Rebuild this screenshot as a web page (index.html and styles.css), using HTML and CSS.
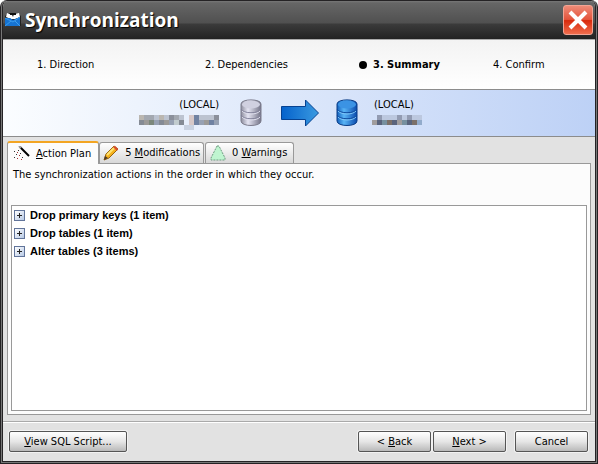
FILE: index.html
```html
<!DOCTYPE html>
<html lang="en">
<head>
<meta charset="utf-8">
<title>Synchronization</title>
<link rel="stylesheet" href="styles.css">
</head>
<body>
<div class="window">
  <header class="titlebar">
    <svg class="app-icon" width="16" height="16" viewBox="0 0 16 16" aria-hidden="true">
      <path d="M0 4L4 1L12 1L16 4L16 14L0 14Z" fill="#222"/>
      <path d="M1 5L2 1L7 3L8 5L9 2L14 1L15 5L10 7L6 7Z" fill="#fff"/>
      <path d="M5 1h6v2H5z" fill="#111"/>
      <path d="M0 6L5 6L8 8L15 5L15 14L0 14Z" fill="#1673d2"/>
      <path d="M0 6L8 10L15 5M0 14L6 9M15 14L10 9" fill="none" stroke="#3d9dec"/>
    </svg>
    <h1>Synchronization</h1>
    <button class="close" type="button" aria-label="Close">
      <svg width="20" height="20" viewBox="0 0 20 20"><path d="M2 2L18 18M18 2L2 18" stroke="#fff" stroke-width="4"/></svg>
    </button>
  </header>

  <ol class="steps">
    <li>1. Direction</li>
    <li>2. Dependencies</li>
    <li class="current"><span class="dot"></span>3. Summary</li>
    <li>4. Confirm</li>
  </ol>

  <section class="route">
    <div class="side source">
      <span>(LOCAL)</span>
      <svg class="masked" width="80" height="15" viewBox="0 0 16 3" shape-rendering="crispEdges" aria-hidden="true">
        <path d="M0 0h1v1H0zM4 0h1v1H4z" fill="#bab6b0"/>
        <path d="M1 0h2v1H1zM7 0h1v1H7z" fill="#a3a8b0"/>
        <path d="M3 0h1v1H3zM5 0h1v1H5zM8 0h1v1H8zM12 0h3v1h-3z" fill="#bcc3d0"/>
        <path d="M6 0h1v1H6zM15 0h1v1h-1z" fill="#8b909b"/>
        <path d="M0 1h1v1H0zM4 1h1v1H4zM8 1h1v1H8z" fill="#858b95"/>
        <path d="M1 1h1v1H1zM5 1h1v1H5zM13 1h1v1h-1z" fill="#9b9a98"/>
        <path d="M2 1h1v1H2z" fill="#7c887c"/>
        <path d="M3 1h1v1H3zM6 1h1v1H6zM12 1h1v1h-1zM15 1h1v1h-1z" fill="#97a1b3"/>
        <path d="M7 1h1v1H7z" fill="#c2cccf"/>
        <path d="M10 0h1v2h-1z" fill="#d6c8c8"/>
        <path d="M11 0h1v2h-1zM14 1h1v1h-1z" fill="#7082a2"/>
        <path d="M9 2h2v1H9z" fill="#c9d2e1"/>
      </svg>
    </div>
    <svg class="db" width="22" height="28" viewBox="0 0 22 28" aria-hidden="true">
      <defs><linearGradient id="grey"><stop stop-color="#8e8e9e"/><stop offset=".35" stop-color="#e4e4f2"/><stop offset="1" stop-color="#747488"/></linearGradient></defs>
      <path d="M1 5C1 -.5 21 -.5 21 5V22C21 28 1 28 1 22Z" fill="url(#grey)" stroke="#7c7c8c"/>
      <ellipse cx="11" cy="5.500" rx="9" ry="4" fill="#d0d0e0"/>
      <path d="M1 10C3 15 19 15 21 10M1 16C3 21 19 21 21 16" fill="none" stroke="#80809a"/>
      <path d="M2 12C5 16 17 16 20 12M2 18C5 22 17 22 20 18" fill="none" stroke="#dcdcea"/>
    </svg>
    <svg class="arrow" width="40" height="28" viewBox="0 0 40 28" aria-hidden="true">
      <defs><linearGradient id="flow"><stop stop-color="#0562cc"/><stop offset="1" stop-color="#3a9ae0"/></linearGradient></defs>
      <path d="M1.500 7.500H25.500V1L38.500 14L25.500 27V20.500H1.500Z" fill="url(#flow)" stroke="#064292"/>
    </svg>
    <svg class="db" width="22" height="28" viewBox="0 0 22 28" aria-hidden="true">
      <defs><linearGradient id="blue"><stop stop-color="#1260bd"/><stop offset=".35" stop-color="#58b4f6"/><stop offset="1" stop-color="#0a4aad"/></linearGradient></defs>
      <path d="M1 5C1 -.5 21 -.5 21 5V22C21 28 1 28 1 22Z" fill="url(#blue)" stroke="#0a3c86"/>
      <ellipse cx="11" cy="5.500" rx="9" ry="4" fill="#3b93e4"/>
      <path d="M1 10C3 15 19 15 21 10M1 16C3 21 19 21 21 16" fill="none" stroke="#0d489c"/>
      <path d="M2 12C5 16 17 16 20 12M2 18C5 22 17 22 20 18" fill="none" stroke="#7ec6f8"/>
    </svg>
    <div class="side target">
      <span>(LOCAL)</span>
      <svg class="masked" width="50" height="10" viewBox="0 0 10 2" shape-rendering="crispEdges" aria-hidden="true">
        <path d="M1 0h1v1H1zM5 0h1v1H5zM7 0h1v1H7z" fill="#929bb2"/>
        <path d="M2 0h3v1H2zM6 0h1v1H6zM8 0h2v1H8z" fill="#bcc8df"/>
        <path d="M0 1h1v1H0zM5 1h1v1H5z" fill="#a09d9e"/>
        <path d="M1 1h1v1H1zM4 1h1v1H4zM7 1h1v1H7z" fill="#59647d"/>
        <path d="M2 1h1v1H2zM6 1h1v1H6z" fill="#76909f"/>
        <path d="M3 1h1v1H3zM8 1h1v1H8z" fill="#7b7069"/>
        <path d="M9 1h1v1H9z" fill="#92abcb"/>
      </svg>
    </div>
  </section>

  <main class="body">
    <div class="tabs" role="tablist">
      <button class="tab active" type="button" role="tab" aria-selected="true">
        <svg width="16" height="16" viewBox="0 0 16 16" aria-hidden="true"><path d="M6 1L15 10" stroke="#000" stroke-width="2"/><path d="M5 0L7 2" stroke="#999" stroke-width="2"/><path d="M0 5h1v1H0zM4 4h1v1H4zM2 8h1v1H2zM6 7h1v1H6zM0 11h1v1H0zM8 11h1v1H8z" fill="#333"/><path d="M3 6h1v1H3zM5 9h1v1H5zM3 12h1v1H3zM7 13h1v1H7z" fill="#a33"/></svg>
        <span><u>A</u>ction Plan</span>
      </button>
      <button class="tab modifications" type="button" role="tab" aria-selected="false">
        <svg width="16" height="16" viewBox="0 0 16 16" aria-hidden="true"><path d="M1 15L3 9L11 1L15 4L6 13Z" fill="#f5b21c" stroke="#966310"/><path d="M4 10L12 2" stroke="#ffe373" stroke-width="2"/><path d="M10 2L12 1L15 4L14 6Z" fill="#d84b31"/><path d="M1 15L2 11L5 13Z" fill="#4c3a28"/></svg>
        <span>5 <u>M</u>odifications</span>
      </button>
      <button class="tab" type="button" role="tab" aria-selected="false">
        <svg width="16" height="16" viewBox="0 0 16 16" aria-hidden="true"><path d="M7 1H9L15 13V15H1V13Z" fill="#bff5d0" stroke="#6f9c82" stroke-dasharray="2 1"/></svg>
        <span>0 <u>W</u>arnings</span>
      </button>
    </div>
    <section class="panel" role="tabpanel">
      <p>The synchronization actions in the order in which they occur.</p>
      <ul class="tree">
        <li><button class="expander" type="button" aria-label="Expand"></button>Drop primary keys (1 item)</li>
        <li><button class="expander" type="button" aria-label="Expand"></button>Drop tables (1 item)</li>
        <li><button class="expander" type="button" aria-label="Expand"></button>Alter tables (3 items)</li>
      </ul>
    </section>
  </main>

  <footer class="actions">
    <button class="btn wide" type="button"><u>V</u>iew SQL Script...</button>
    <button class="btn" type="button">&lt; <u>B</u>ack</button>
    <button class="btn" type="button"><u>N</u>ext &gt;</button>
    <button class="btn cancel" type="button">Cancel</button>
  </footer>
</div>
</body>
</html>
```
FILE: styles.css
```css
* { box-sizing: border-box; }

body {
  margin: 0;
  background: #fff;
  color: #000;
  font: 11px/14px "DejaVu Sans Condensed", "DejaVu Sans", sans-serif;
}

button { font: inherit; color: inherit; }

.window {
  display: flex;
  flex-direction: column;
  min-height: 100vh;
  border: 3px double #252325;
  border-top: 1px solid #252325;
  border-radius: 7px 7px 0 0;
  background: #e2e2e2 padding-box, #6a686a;
  background: linear-gradient(#e2e2e2, #e2e2e2) padding-box, linear-gradient(#777, #777) border-box;
  overflow: hidden;
}

.titlebar {
  display: flex;
  align-items: center;
  height: 39px;
  padding: 0 2px;
  border-bottom: 1px solid #aaa;
  background: linear-gradient(#777 0, #666 2px, #505050 22px, #3b3b3b 23px, #222 100%);
}

.titlebar h1 {
  flex: 1;
  margin: 0 0 0 4px;
  color: #fff;
  font: bold 19px/24px "Open Sans", sans-serif;
  text-shadow: 1px 1px 1px #000;
}

.close {
  display: grid;
  place-items: center;
  width: 30px;
  height: 30px;
  padding: 0;
  border: 1px solid #f3a494;
  border-radius: 3px;
  background: linear-gradient(#ee8b78, #e4543c 48%, #d92a0c 52%, #f06d4d);
}

.steps {
  display: grid;
  grid-template-columns: 168px 154px 134px 1fr;
  align-items: center;
  height: 49px;
  margin: 0;
  padding: 0 0 0 34px;
  background: linear-gradient(#f3f3f3, #fff);
  list-style: none;
}

.current { display: flex; align-items: center; gap: 6px; font-weight: bold; }
.dot { width: 8px; height: 8px; border-radius: 50%; background: #000; }

.route {
  display: grid;
  grid-template-columns: 221px 22px 42px 22px 1fr;
  column-gap: 16px;
  align-items: center;
  height: 48px;
  border: solid #8c8c8c;
  border-width: 1px 0;
  background: linear-gradient(90deg, #fbfdff, #bdd1f6);
}

.side { display: flex; flex-direction: column; gap: 3px; height: 30px; }
.source { align-items: flex-end; padding-right: 5px; }
.arrow { justify-self: end; }
.masked { display: block; flex: none; }
.target .masked { margin-left: -2px; }

.body { display: flex; flex: 1; flex-direction: column; padding: 4px 4px 6px; }

.tabs { display: flex; align-items: flex-end; }

.tab {
  display: flex;
  align-items: center;
  gap: 6px;
  height: 21px;
  padding: 0 6px 0 4px;
  border: 1px solid #999;
  border-bottom: 0;
  border-radius: 3px 3px 0 0;
  background: linear-gradient(#fff, #d8d8d8);
}

.tab.active {
  z-index: 1;
  height: 23px;
  margin-bottom: -1px;
  padding: 0 7px 0 6px;
  border-top: 2px solid #f3a522;
  background: #fcfcfc;
}

.modifications { margin-right: 1px; padding: 0 3px; }

.panel {
  display: flex;
  flex: 1;
  flex-direction: column;
  padding: 4px 3px 3px;
  border: 1px solid #999;
  background: #fcfcfc;
}

.panel p { height: 37px; margin: 0; padding-left: 2px; }

.tree {
  flex: 1;
  margin: 0;
  padding: 0 2px;
  border: 1px solid #999;
  background: #fff;
  font: bold 11px/18px "Liberation Sans", sans-serif;
  list-style: none;
}

.tree li { display: flex; align-items: center; gap: 5px; height: 18px; }

.expander {
  width: 11px;
  height: 11px;
  padding: 0;
  border: 1px solid #61749a;
  background:
    linear-gradient(#222, #222) center / 5px 1px no-repeat,
    linear-gradient(#222, #222) center / 1px 5px no-repeat,
    linear-gradient(135deg, #fff, #b7c9e5);
}

.actions {
  display: flex;
  align-items: center;
  height: 40px;
  padding: 0 7px 0 6px;
  border-top: 1px solid #aaa;
  box-shadow: inset 0 1px #fff;
}

.btn {
  width: 73px;
  height: 21px;
  margin-left: 2px;
  padding: 0;
  border: 1px solid #555;
  border-radius: 2px;
  background: linear-gradient(#fff, #e6e6e6 50%, #b9b9b9);
  box-shadow: 0 0 0 1px #f2f2f2;
}

.wide { width: 118px; margin: 0 auto 0 0; }
.cancel { margin-left: 9px; }
```
